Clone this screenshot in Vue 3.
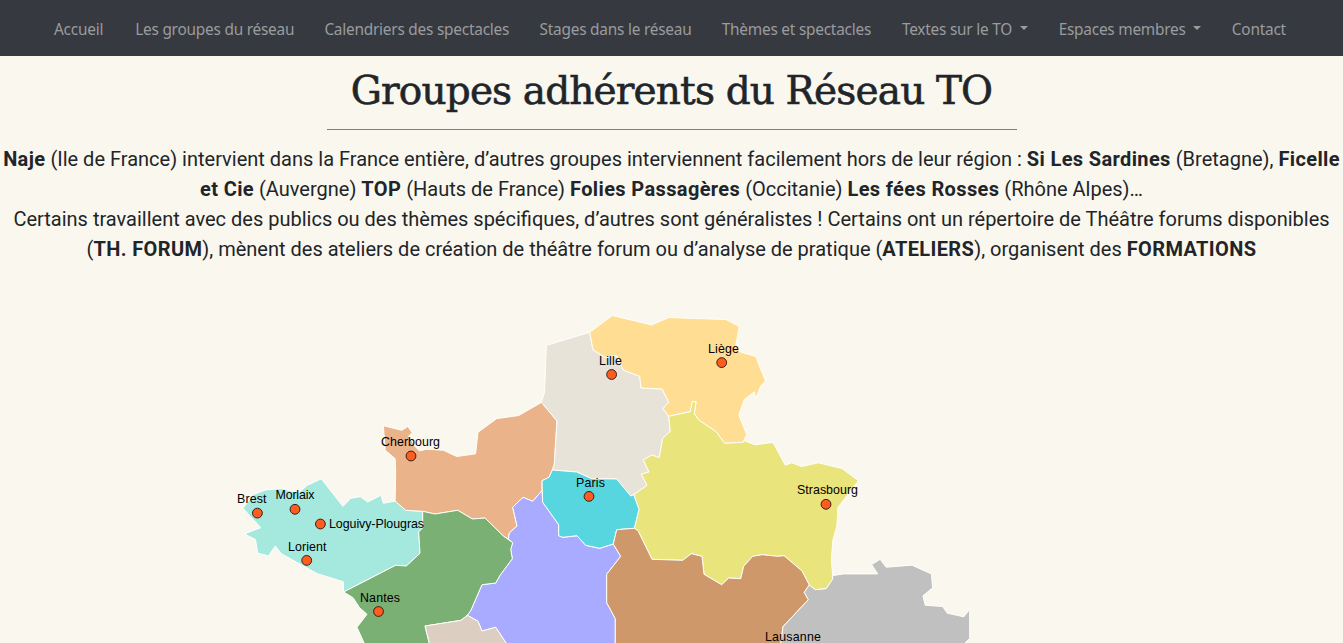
<script setup>
const links = [
  { label: 'Accueil', size: 'w1' },
  { label: 'Les groupes du réseau', size: 'w2' },
  { label: 'Calendriers des spectacles', size: 'w3' },
  { label: 'Stages dans le réseau', size: 'w4' },
  { label: 'Thèmes et spectacles', size: 'w5' },
  { label: 'Textes sur le TO', size: 'w6', menu: true },
  { label: 'Espaces membres', size: 'w7', menu: true },
  { label: 'Contact', size: 'w8' },
]

const regions = [
  { name: 'bretagne', fill: '#a4e8de', points: '243,508.3 260.7,527.7 244.4,533.9 255.5,539.5 257.6,553 268.5,555.9 275.3,545.9 281.3,553.7 317.3,573.7 343.3,581.7 343.7,592 363.3,581.7 395.7,565.3 406.3,566 420,553.3 418.7,531.7 422.7,528 422.7,511.3 405.7,510.3 395.7,501 383.3,503.3 381,495.2 367.7,502 360.3,496.7 350.7,498.3 343,506.5 321.3,478.8 307.3,485.3 298.3,493 281.7,488.6 265.7,489.9 253.3,494.6' },
  { name: 'normandie', fill: '#eab38a', points: '383.4,425.7 401.7,430.3 407.9,426.4 412.2,432.7 408.6,436 415,446.3 419.3,450.9 426.7,449.2 443.3,450.2 456.7,456.5 475.6,453.8 478,432.3 496.8,418.6 518.7,415.5 541.7,402.3 557,421 554.3,464.3 552.3,470 549,477.3 542,480.7 542,490.7 532.7,501.3 523,497.3 512.7,507.3 517,526 509.3,533 508.3,539 503.3,536 485,518 472.3,519 457.7,510.3 435,514 422.7,511.3 405.7,510.3 395.1,501 395.7,471.7 395.1,458.6 385.2,450.2' },
  { name: 'hauts-de-france', fill: '#e7e3d9', points: '546.4,345.4 589.7,332.3 593,349.7 605,357.3 616.7,355.7 623.3,370 639.7,376.3 641,388 662,389 668.7,402 663,408.7 668.7,416.3 670.3,431.3 662.7,438.3 659.3,457.7 651.7,455 643.3,460 649,472 641.3,474 647,485.3 633.7,494.7 630.7,496 616.7,479 591.7,478.7 576.7,472 552.3,470 554.3,464.3 557,421 541.4,402.3 544.6,392' },
  { name: 'belgique', fill: '#ffde94', points: '589.7,332.3 612.3,315.5 651.7,324.9 668.7,317.5 726,319.5 739.3,326.4 735.6,346.5 740.3,351.9 756.2,356.6 758.8,364.8 765.6,380.8 760.8,386 755.5,399.3 754.5,391.8 744.5,399.3 738.9,415 746.6,434.3 743.3,442.3 724.7,443.3 716,431.7 698.3,419.7 694.3,413.3 696,401.7 692.3,401.7 690.3,411.7 668.7,416.3 663,408.7 668.7,402 662,389 641,388 639.7,376.3 623.3,370 616.7,355.7 605,357.3 593,349.7' },
  { name: 'grand-est', fill: '#e9e47c', points: '668.7,416.3 690.3,411.7 692.3,401.7 696,401.7 694.3,413.3 698.3,419.7 716,431.7 724.7,443.3 743.3,442.3 743.7,440.5 755,444.8 773,442.5 785.3,465.2 791.7,462.8 801.7,466.5 818.3,462.8 842,468.5 858.4,480.7 849.8,491.9 837.9,507.5 836.9,526 832.9,540 831.3,560 833,579 826.3,588.7 815.3,589.7 809.3,585 802,571 784,555.7 777.7,556.3 762.3,554.7 752.7,556.3 743.7,566.3 740.7,578.7 728.7,578 721.7,584.7 704,574.3 702,556.3 691.3,553.7 682.7,560.3 652,559.3 638,530.7 634.3,528.3 639,509.3 633.7,494.7 647,485.3 641.3,474 649,472 643.3,460 651.7,455 659.3,457.7 662.7,438.3 670.3,431.3' },
  { name: 'centre', fill: '#a8abff', points: '542,490.7 542.7,502.3 558.7,524.7 558.7,535.7 562.7,537.3 577,535.7 585.7,545.3 599.7,548.3 613.3,544 620.7,556.3 606.7,574.3 606.7,602.7 615.3,618.7 615.3,646 508,646 495.7,627.3 482,631 478,621.3 467.3,615.3 470.7,610.7 482,584.7 495.7,583 500,575.3 512.3,558.7 510.7,549.3 512.7,542.7 508.3,539 509.3,533 517,526 512.7,507.3 523,497.3 532.7,501.3' },
  { name: 'ile-de-france', fill: '#58d6df', points: '552.3,470 576.7,472 591.7,478.7 616.7,479 630.7,496 633.7,494.7 639,509.3 634.3,528.3 616.7,529.7 613.3,544 599.7,548.3 585.7,545.3 577,535.7 562.7,537.3 558.7,535.7 558.7,524.7 542.7,502.3 542,480.7 549,477.3' },
  { name: 'pays-de-la-loire', fill: '#7ab073', points: '422.7,511.3 435,514 457.7,510.3 472.3,519 485,518 503.3,536 512.7,542.7 510.7,549.3 512.3,558.7 500,575.3 495.7,583 482,584.7 470.7,610.7 467.3,615.3 461,620.3 425,626 430,646 365.5,646 357,627.3 367,614.3 359.5,607.6 353,597.7 343.7,592 395.7,565.3 406.3,566 420,553.3 418.7,531.7 422.7,528' },
  { name: 'nouvelle-aquitaine', fill: '#dccfc2', points: '425,626 461,620.3 467.3,615.3 478,621.3 482,631 495.7,627.3 508,646 430,646' },
  { name: 'bourgogne', fill: '#cf986b', points: '616.7,529.7 634.3,528.3 638,530.7 652,559.3 682.7,560.3 691.3,553.7 702,556.3 704,574.3 721.7,584.7 728.7,578 740.7,578.7 743.7,566.3 752.7,556.3 762.3,554.7 777.7,556.3 784,555.7 802,571 809.3,585 804.3,592.3 808.3,599.7 783,626.7 780.5,646 615.3,646 615.3,618.7 606.7,602.7 606.7,574.3 620.7,556.3 613.3,544' },
  { name: 'suisse', fill: '#c0c0c0', points: '809.3,585 815.3,589.7 826.3,588.7 832.7,579 832.7,575.6 843.3,573.9 877.7,573.9 871.6,564.5 880.2,559.3 886.2,567.2 912,565.2 931.5,574 932.5,587.9 922.9,595.9 925.2,605.2 942.6,606.5 947.3,613.2 963.8,616.8 970,609 970,638 962,646 780.5,646 783,626.7 808.3,599.7 804.3,592.3' },
]

const cities = [
  { name: 'Cherbourg', x: 411, y: 456, tx: 381, ty: 446, w: 59 },
  { name: 'Brest', x: 257.4, y: 513.1, tx: 237, ty: 503, w: 29.5 },
  { name: 'Morlaix', x: 295, y: 509.3, tx: 275.5, ty: 499, w: 39 },
  { name: 'Loguivy-Plougras', x: 320.4, y: 524, tx: 329, ty: 528, w: 95 },
  { name: 'Lorient', x: 306.7, y: 560.4, tx: 288, ty: 551, w: 38.5 },
  { name: 'Nantes', x: 378.5, y: 611.5, tx: 360, ty: 602, w: 40 },
  { name: 'Lille', x: 611.6, y: 374.5, tx: 599, ty: 365, w: 23 },
  { name: 'Liège', x: 721.7, y: 362.6, tx: 708, ty: 353, w: 31 },
  { name: 'Paris', x: 589, y: 496.4, tx: 576, ty: 487, w: 29 },
  { name: 'Strasbourg', x: 826, y: 504.3, tx: 797, ty: 494, w: 61 },
  { name: 'Lausanne', x: 793, y: 650, tx: 765, ty: 641, w: 56 },
]
</script>

<template>
  <div class="page">
    <nav class="navbar">
      <a v-for="l in links" :key="l.label" class="link" :class="l.size">
        <span>{{ l.label }}</span><i v-if="l.menu" class="caret"></i>
      </a>
    </nav>
    <h1>Groupes adhérents du Réseau TO</h1>
    <hr />
    <p class="intro">
      <b>Naje</b> (Ile de France) intervient dans la France entière, d’autres groupes interviennent facilement hors de leur région : <b>Si Les Sardines</b> (Bretagne), <b>Ficelle<br />et Cie</b> (Auvergne) <b>TOP</b> (Hauts de France) <b>Folies Passagères</b> (Occitanie) <b>Les fées Rosses</b> (Rhône Alpes)…<br />Certains travaillent avec des publics ou des thèmes spécifiques, d’autres sont généralistes ! Certains ont un répertoire de Théâtre forums disponibles<br />(<b>TH. FORUM</b>), mènent des ateliers de création de théâtre forum ou d’analyse de pratique (<b>ATELIERS</b>), organisent des <b>FORMATIONS</b>
    </p>
    <svg class="map" viewBox="230 280 739 363" width="739" height="363">
      <polygon v-for="r in regions" :key="r.name" :points="r.points" :fill="r.fill" />
      <g v-for="c in cities" :key="c.name">
        <circle :cx="c.x" :cy="c.y" r="4.9" />
        <text :x="c.tx" :y="c.ty" :textLength="c.w">{{ c.name }}</text>
      </g>
    </svg>
  </div>
</template>

<style>
html, body { margin: 0; overflow: hidden; background: #faf7ee; }
</style>

<style scoped>
.page { height: 643px; overflow: hidden; background: #faf7ee; color: #212529; }
.navbar { box-sizing: border-box; display: flex; height: 56px; padding: 3px 0 0 54px; align-items: center; gap: 30.7px; background: #363940; }
.link { flex: none; display: flex; align-items: center; white-space: nowrap; color: #9a9c9e; font: 15.4px/24px "Noto Sans", "Open Sans", sans-serif; letter-spacing: -0.23px; }
.w1 { width: 50.5px; }
.w2 { width: 158.5px; }
.w3 { width: 184.5px; }
.w4 { width: 151.5px; }
.w5 { width: 149.5px; }
.w6 { width: 126px; justify-content: space-between; }
.w7 { width: 142.5px; justify-content: space-between; }
.w8 { width: 56px; }
.caret { border: 4.5px solid transparent; border-top-color: currentColor; border-bottom: 0; margin-top: -3px; }
h1 { margin: 11px 0 0; height: 47px; text-align: center; white-space: nowrap; font: 400 39px/48px "DejaVu Serif", serif; letter-spacing: -0.85px; -webkit-text-stroke: 0.6px #212529; }
hr { width: 690px; height: 1px; margin: 15px auto 14px; border: 0; background: #7f7e7c; }
.intro { margin: 0; height: 120px; text-align: center; white-space: nowrap; font: 20px/30px Roboto, sans-serif; }
.intro b { font-weight: 700; letter-spacing: 0.37px; }
.map { display: block; margin: 16px 0 0 230px; }
polygon { stroke: #fffffb; stroke-width: 1; stroke-linejoin: round; }
circle { fill: #ff5d20; stroke: #332018; stroke-width: 1; }
text { font: 12.4px "Liberation Sans", Arial, sans-serif; fill: #000; }
</style>
